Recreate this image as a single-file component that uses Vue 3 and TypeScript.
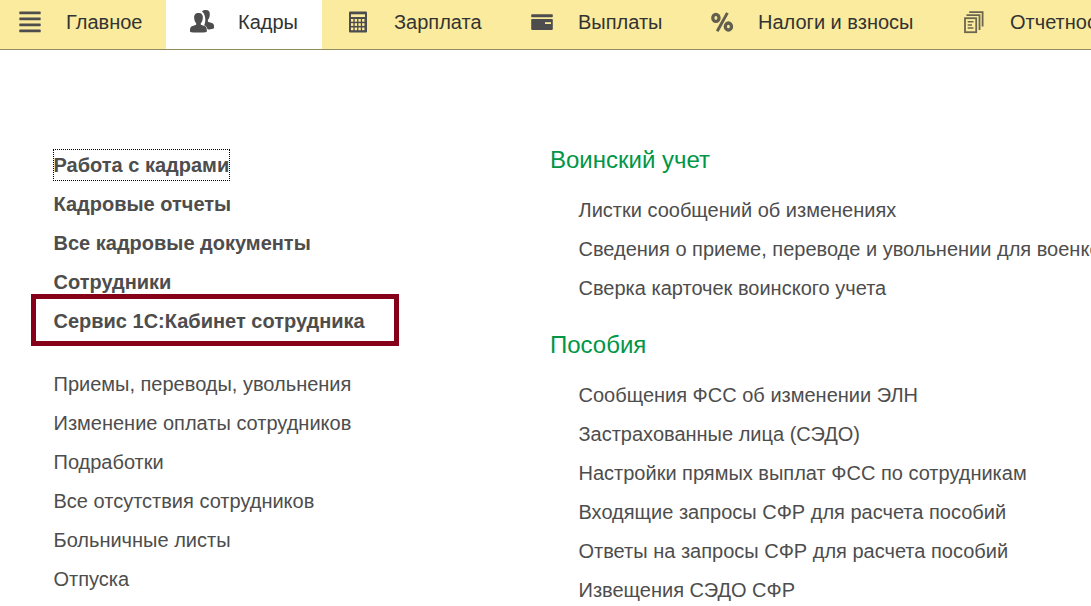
<script setup lang="ts">
interface Section {
  id: string
  label: string
  active?: boolean
}

interface Group {
  title: string
  links: string[]
}

const sections: Section[] = [
  { id: 'main', label: 'Главное' },
  { id: 'staff', label: 'Кадры', active: true },
  { id: 'salary', label: 'Зарплата' },
  { id: 'payments', label: 'Выплаты' },
  { id: 'taxes', label: 'Налоги и взносы' },
  { id: 'reports', label: 'Отчетность' },
]

const primary: string[] = [
  'Работа с кадрами',
  'Кадровые отчеты',
  'Все кадровые документы',
  'Сотрудники',
  'Сервис 1С:Кабинет сотрудника',
]

const secondary: string[] = [
  'Приемы, переводы, увольнения',
  'Изменение оплаты сотрудников',
  'Подработки',
  'Все отсутствия сотрудников',
  'Больничные листы',
  'Отпуска',
]

const groups: Group[] = [
  {
    title: 'Воинский учет',
    links: [
      'Листки сообщений об изменениях',
      'Сведения о приеме, переводе и увольнении для военкомата',
      'Сверка карточек воинского учета',
    ],
  },
  {
    title: 'Пособия',
    links: [
      'Сообщения ФСС об изменении ЭЛН',
      'Застрахованные лица (СЭДО)',
      'Настройки прямых выплат ФСС по сотрудникам',
      'Входящие запросы СФР для расчета пособий',
      'Ответы на запросы СФР для расчета пособий',
      'Извещения СЭДО СФР',
    ],
  },
]
</script>

<template>
  <div class="page">
    <nav class="bar">
      <div v-for="s in sections" :key="s.id" class="section" :class="[s.id, { active: s.active }]">
        <svg class="icon" width="24" height="24" viewBox="0 0 24 24">
          <g v-if="s.id === 'main'" fill="#4d4d4d">
            <rect x="1.3" y="1.5" width="21.4" height="2.7" rx=".6" />
            <rect x="1.3" y="7.5" width="21.4" height="2.7" rx=".6" />
            <rect x="1.3" y="13.5" width="21.4" height="2.7" rx=".6" />
            <rect x="1.3" y="19.6" width="21.4" height="2.7" rx=".6" />
          </g>
          <g v-else-if="s.id === 'staff'" fill="#4d4d4d">
            <path d="M12 1.5C12.800.4 14.200 0 15.800 0c3 0 4.300 1.800 4 5-.2 2-.8 3.800-1.900 4.800v1.900l4.500 1.500c1.200.5 1.600 1.500 1.600 3v1.800c-1.300 1.300-3.800 1.600-6.200 1.400-.8-1.500-2.200-2.600-4.300-3.200 1.200-1.700 1.800-3.600 1.800-6.200 0-3.700-1-6.700-3.300-8.500z" />
            <path d="M8.500 3c3.300 0 4.600 2 4.300 5.200-.2 2.300-.9 4-2 5v1.600l4.300 1.500c1.300.6 1.700 2 1.700 4v1.500c-1.500.7-4.700.8-8.400.8S1.500 22.500 0 21.800v-1.500c0-2 .6-3.400 1.900-4l4.300-1.500v-1.600c-1.100-1-1.800-2.700-2-5C3.900 5 5.200 3 8.500 3z" stroke="#fff" stroke-width="1.400" paint-order="stroke" />
          </g>
          <g v-else-if="s.id === 'salary'">
            <rect x="3" y="1.5" width="18" height="21" rx="1" fill="#4d4d4d" />
            <rect x="5" y="4.3" width="14" height="2.7" fill="#faeb9e" />
            <g fill="#faeb9e">
              <template v-for="y in [9, 13.2, 17.5]" :key="y">
                <rect v-for="x in [5, 8.7, 12.4, 16.1]" :key="x" :x="x" :y="y" width="2.4" height="2.7" />
              </template>
            </g>
          </g>
          <g v-else-if="s.id === 'payments'">
            <rect x="1.2" y="4.3" width="21.6" height="3" rx=".8" fill="#4d4d4d" />
            <rect x="1.2" y="9" width="21.6" height="10.9" rx=".8" fill="#4d4d4d" />
            <rect x="15" y="12.2" width="6" height="1.8" fill="#faeb9e" />
          </g>
          <g v-else-if="s.id === 'taxes'" fill="none" stroke="#625f4f">
            <ellipse cx="5.9" cy="7.9" rx="3.1" ry="3.5" stroke-width="3.3" />
            <ellipse cx="18.4" cy="16.500" rx="3.1" ry="3.5" stroke-width="3.3" />
            <path d="M17.4 2.9L7.2 21.3" stroke-width="2.9" />
          </g>
          <g v-else fill="none" stroke="#6b674e" stroke-width="1.8">
            <path d="M7.2 2.2H20.600V16.500M4.500 5.200H17.500V20" />
            <rect x="3" y="8.2" width="11.2" height="14" />
            <path d="M5.700 11.700H11.500M5.700 14.900H10M5.700 18H11.500" stroke-width="1.500" />
          </g>
        </svg>
        <span class="name">{{ s.label }}</span>
      </div>
    </nav>

    <main class="content">
      <div class="left">
        <ul class="list bold">
          <li v-for="(t, i) in primary" :key="t">
            <span :class="{ focused: i === 0, marked: i === 4 }">{{ t }}</span>
          </li>
        </ul>
        <ul class="list">
          <li v-for="t in secondary" :key="t"><span>{{ t }}</span></li>
        </ul>
      </div>
      <div class="right">
        <section v-for="g in groups" :key="g.title" class="group">
          <h2>{{ g.title }}</h2>
          <ul class="list">
            <li v-for="t in g.links" :key="t"><span>{{ t }}</span></li>
          </ul>
        </section>
      </div>
    </main>
  </div>
</template>

<style>
body {
  margin: 0;
  background: #fff;
  overflow: hidden;
}
</style>

<style scoped>
.page {
  width: 1091px;
  height: 606px;
  overflow: hidden;
  background: #fff;
  color: #4d4d4d;
  font-family: "Liberation Sans", Arial, sans-serif;
  font-size: 20px;
}
.bar {
  box-sizing: border-box;
  display: flex;
  height: 50px;
  background: #faeb9e;
  border-bottom: 1px solid #918b5e;
  color: #333;
}
.section {
  box-sizing: border-box;
  display: flex;
  flex: none;
  gap: 24px;
  height: 49px;
  padding: 10px 0 0 24px;
  white-space: nowrap;
}
.section.main { width: 166px; padding-left: 18px; }
.section.staff { width: 156px; }
.section.salary { width: 184px; }
.section.payments { width: 180px; }
.section.taxes { width: 252px; }
.section.reports { width: 200px; }
.section.active { background: #fff; }
.icon { flex: none; }
.name { line-height: 24px; }
.content {
  display: flex;
  padding-top: 95px;
}
.left {
  flex: none;
  width: 496.5px;
  padding: 1px 0 0 53.5px;
}
.list {
  margin: 0;
  padding: 0;
  list-style: none;
}
.list li {
  height: 39px;
  line-height: 39px;
  white-space: nowrap;
}
.bold {
  margin-bottom: 24px;
  font-weight: bold;
}
.focused {
  position: relative;
}
.focused::after {
  content: "";
  position: absolute;
  inset: -5px -.5px -5px -.5px;
  border: 1px dotted #000;
}
.marked {
  position: relative;
}
.marked::after {
  content: "";
  position: absolute;
  top: -16px;
  left: -22.5px;
  width: 358px;
  height: 42px;
  border: 5px solid #850018;
}
.group {
  height: 185px;
}
.group h2 {
  margin: 0;
  height: 46px;
  line-height: 30px;
  font-size: 24px;
  font-weight: normal;
  color: #009646;
}
.group .list {
  padding-left: 28.5px;
}
</style>
